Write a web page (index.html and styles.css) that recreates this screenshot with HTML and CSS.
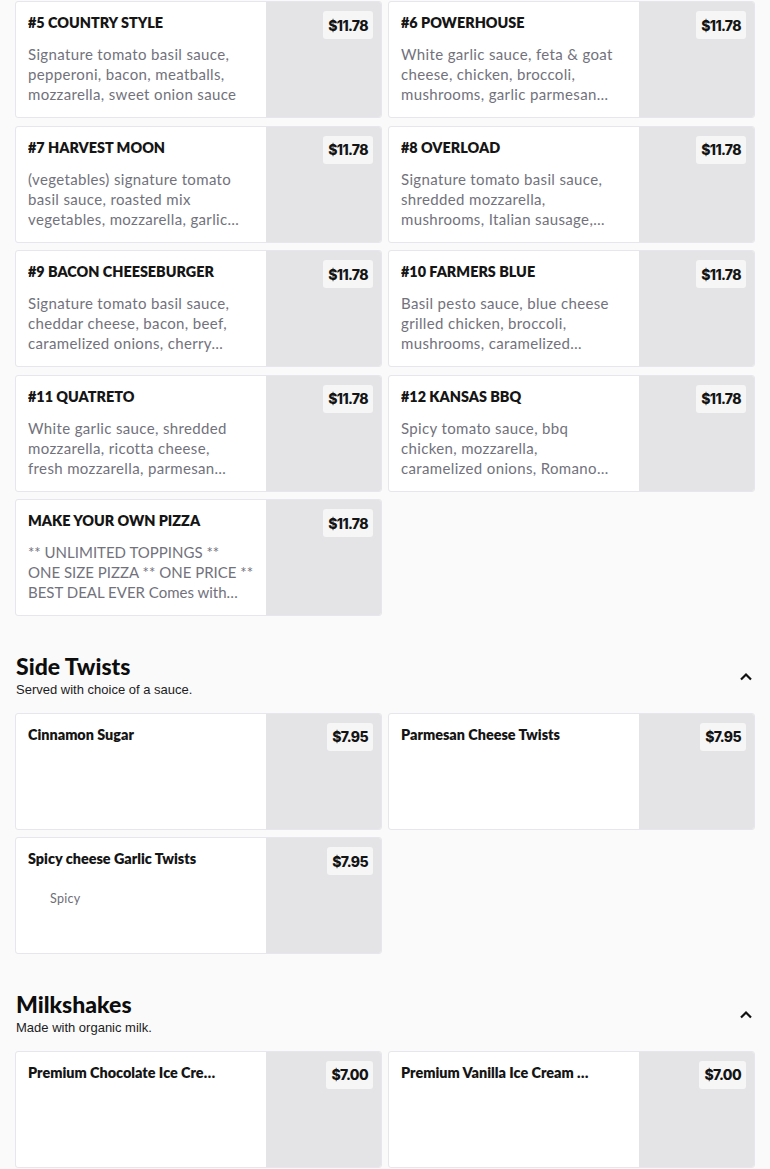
FILE: index.html
```html
<!DOCTYPE html>
<html>
<head>
<meta charset="utf-8">
<link rel="stylesheet" href="styles.css">
</head>
<body>
<div class="page">
  <div class="grid">
    <div class="card"><div class="info"><div class="title">#5 COUNTRY STYLE</div><div class="desc">Signature tomato basil sauce, pepperoni, bacon, meatballs, mozzarella, sweet onion sauce</div></div><div class="thumb"><span class="price">$11.78</span></div></div>
    <div class="card"><div class="info"><div class="title">#6 POWERHOUSE</div><div class="desc">White garlic sauce, feta &amp; goat cheese, chicken, broccoli, mushrooms, garlic parmesan sauce, mozzarella</div></div><div class="thumb"><span class="price">$11.78</span></div></div>
    <div class="card"><div class="info"><div class="title">#7 HARVEST MOON</div><div class="desc">(vegetables) signature tomato basil sauce, roasted mix vegetables, mozzarella, garlic parmesan sauce</div></div><div class="thumb"><span class="price">$11.78</span></div></div>
    <div class="card"><div class="info"><div class="title">#8 OVERLOAD</div><div class="desc">Signature tomato basil sauce, shredded mozzarella, mushrooms, Italian sausage, pepperoni, meatballs</div></div><div class="thumb"><span class="price">$11.78</span></div></div>
    <div class="card"><div class="info"><div class="title">#9 BACON CHEESEBURGER</div><div class="desc">Signature tomato basil sauce, cheddar cheese, bacon, beef, caramelized onions, cherry tomatoes</div></div><div class="thumb"><span class="price">$11.78</span></div></div>
    <div class="card"><div class="info"><div class="title">#10 FARMERS BLUE</div><div class="desc">Basil pesto sauce, blue cheese grilled chicken, broccoli, mushrooms, caramelized onions, mozzarella</div></div><div class="thumb"><span class="price">$11.78</span></div></div>
    <div class="card"><div class="info"><div class="title">#11 QUATRETO</div><div class="desc">White garlic sauce, shredded mozzarella, ricotta cheese, fresh mozzarella, parmesan cheese</div></div><div class="thumb"><span class="price">$11.78</span></div></div>
    <div class="card"><div class="info"><div class="title">#12 KANSAS BBQ</div><div class="desc">Spicy tomato sauce, bbq chicken, mozzarella, caramelized onions, Romano cheese, cilantro</div></div><div class="thumb"><span class="price">$11.78</span></div></div>
    <div class="card"><div class="info"><div class="title">MAKE YOUR OWN PIZZA</div><div class="desc caps">** UNLIMITED TOPPINGS ** ONE SIZE PIZZA ** ONE PRICE ** BEST DEAL EVER Comes with mozzarella</div></div><div class="thumb"><span class="price">$11.78</span></div></div>
  </div>

  <div class="section">
    <div class="section-head">
      <div>
        <h2 class="section-title">Side Twists</h2>
        <p class="section-sub">Served with choice of a sauce.</p>
      </div>
      <svg class="chev" width="14" height="10" viewBox="0 0 14 10"><path d="M2 7.5 L7 2.5 L12 7.5" fill="none" stroke="#111" stroke-width="2.2"/></svg>
    </div>
    <div class="grid">
      <div class="card"><div class="info"><div class="title cap">Cinnamon Sugar</div></div><div class="thumb"><span class="price">$7.95</span></div></div>
      <div class="card"><div class="info"><div class="title cap">Parmesan Cheese Twists</div></div><div class="thumb"><span class="price">$7.95</span></div></div>
      <div class="card"><div class="info"><div class="title cap">Spicy cheese Garlic Twists</div><div class="tag">Spicy</div></div><div class="thumb"><span class="price">$7.95</span></div></div>
    </div>
  </div>

  <div class="section">
    <div class="section-head">
      <div>
        <h2 class="section-title">Milkshakes</h2>
        <p class="section-sub">Made with organic milk.</p>
      </div>
      <svg class="chev" width="14" height="10" viewBox="0 0 14 10"><path d="M2 7.5 L7 2.5 L12 7.5" fill="none" stroke="#111" stroke-width="2.2"/></svg>
    </div>
    <div class="grid">
      <div class="card"><div class="info"><div class="title cap">Premium Chocolate Ice Cream Milkshake</div></div><div class="thumb"><span class="price">$7.00</span></div></div>
      <div class="card"><div class="info"><div class="title cap">Premium Vanilla Ice Cream Milkshake</div></div><div class="thumb"><span class="price">$7.00</span></div></div>
    </div>
  </div>
</div>
</body>
</html>
```

FILE: styles.css
```css
html, body {
  margin: 0;
  padding: 0;
  background: #fafafb;
}
.page {
  padding: 1px 15px 0;
}
.grid {
  display: grid;
  grid-template-columns: 1fr 1fr;
  column-gap: 6px;
  row-gap: 7.5px;
}
.card {
  display: flex;
  height: 117px;
  box-sizing: border-box;
  background: #fff;
  border: 1px solid #e6e6ec;
  border-radius: 3px;
  overflow: hidden;
}
.info {
  width: 250px;
  flex: none;
  box-sizing: border-box;
  padding: 11px 22px 0 12px;
}
.thumb {
  flex: 1;
  background: #e4e4e6;
  position: relative;
}
.price {
  position: absolute;
  top: 9px;
  right: 8px;
  height: 28px;
  padding: 0 5px;
  display: flex;
  align-items: center;
  background: #f6f6f7;
  border-radius: 3px;
  font-family: "Inter", sans-serif;
  font-weight: 800;
  font-size: 14px;
  letter-spacing: -0.6px;
  color: #141414;
}
.title {
  font-family: "Lato", sans-serif;
  font-weight: 800;
  font-size: 14.4px;
  line-height: 20px;
  color: #151515;
  max-width: 193px;
  white-space: nowrap;
  overflow: hidden;
  text-overflow: ellipsis;
}
.desc {
  margin-top: 11px;
  font-family: "Lato", sans-serif;
  font-size: 15px;
  line-height: 20px;
  letter-spacing: 0.35px;
  color: #72727c;
  display: -webkit-box;
  -webkit-line-clamp: 3;
  -webkit-box-orient: vertical;
  overflow: hidden;
}
.desc.caps {
  margin-right: -10px;
  letter-spacing: 0;
}
.tag {
  margin: 22px 0 0 22px;
  font-family: "Lato", sans-serif;
  font-size: 12.5px;
  letter-spacing: 0.3px;
  color: #6e6e78;
}
.section {
  margin-top: 37px;
}
.section-head {
  display: flex;
  align-items: center;
  justify-content: space-between;
  padding-left: 1px;
  padding-right: 2px;
  margin-bottom: 14.5px;
}
.section-title {
  margin: 0;
  font-family: "Lato", sans-serif;
  font-weight: 900;
  font-size: 23px;
  line-height: 27px;
  color: #0d0d0d;
}
.section-sub {
  margin: 2px 0 0;
  font-family: "Liberation Sans", Arial, sans-serif;
  font-size: 13px;
  line-height: 16px;
  color: #1c1c1c;
}
.chev {
  display: block;
  margin-top: 2px;
}
```
